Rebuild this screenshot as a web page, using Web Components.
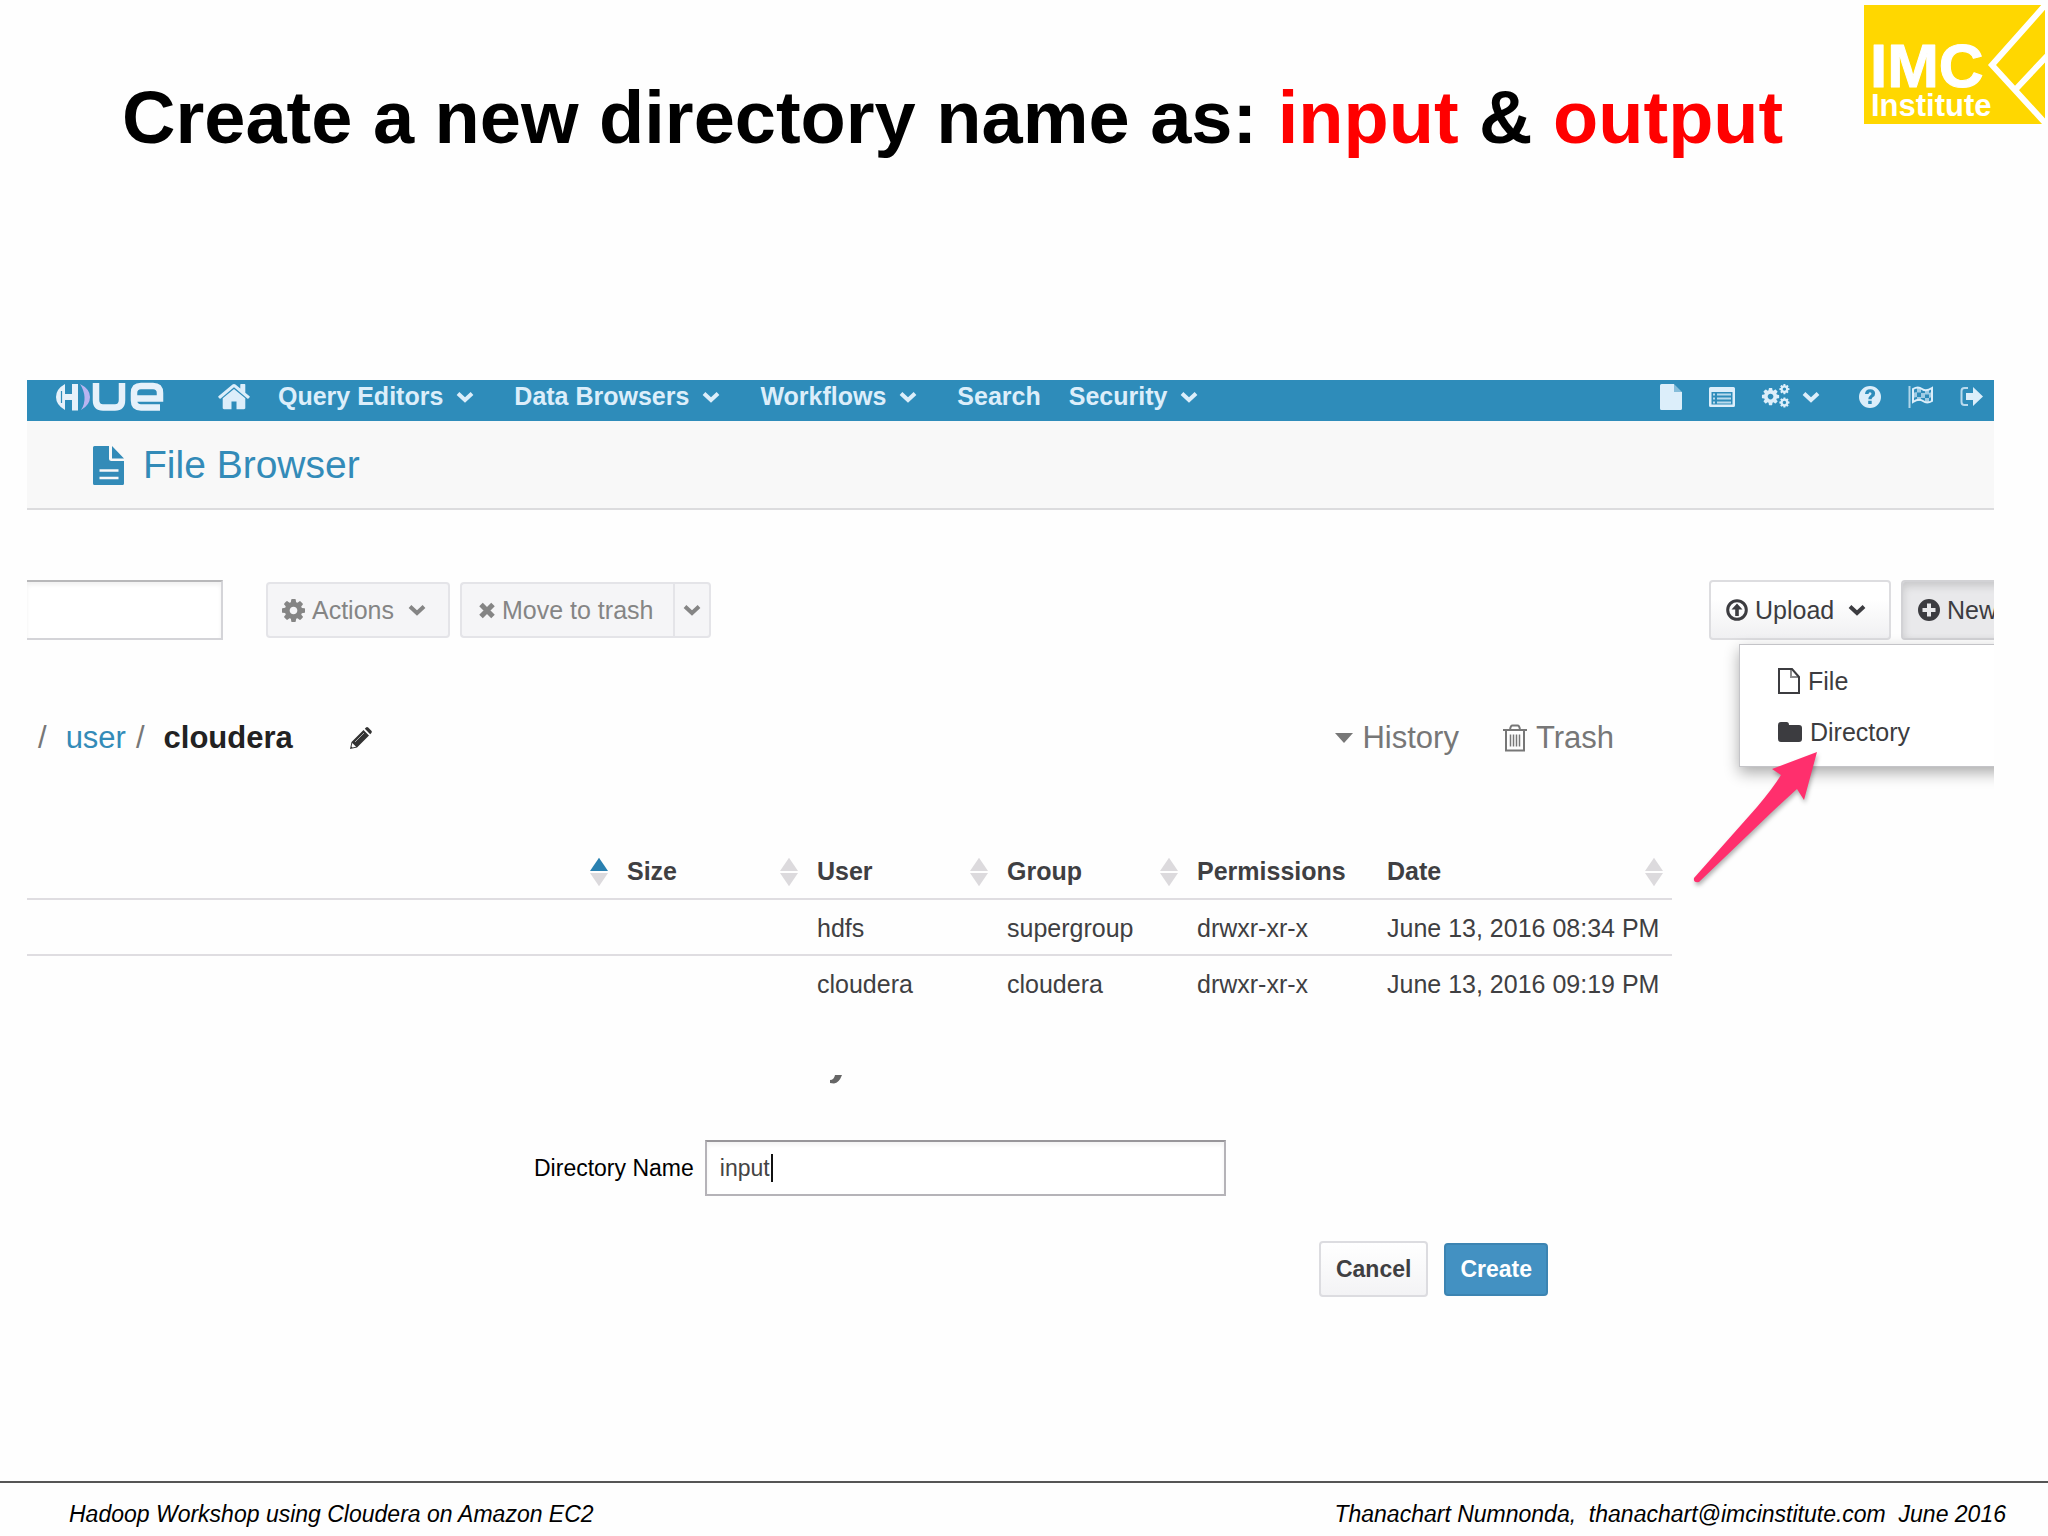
<!DOCTYPE html>
<html lang="en">
<head>
<meta charset="utf-8">
<title>Create a new directory</title>
<style>
  html, body { margin: 0; }
  body { background: #fefefe; color: #000; font-family: "Liberation Sans", Arial, sans-serif; }
</style>
</head>
<body>
<workshop-slide>
  <slide-heading slot="heading">Create a new directory name as: <em>input</em> &amp; <em>output</em></slide-heading>
  <hue-app></hue-app>
  <slide-footer slot="footer">
    <span slot="course">Hadoop Workshop using Cloudera on Amazon EC2</span>
    <span slot="author">Thanachart Numnonda,&nbsp; thanachart@imcinstitute.com&nbsp; June 2016</span>
  </slide-footer>
</workshop-slide>

<script>
const COG = 'M1152 896q0-106-75-181t-181-75-181 75-75 181 75 181 181 75 181-75 75-181zm512-109v222q0 12-8 23t-20 13l-185 28q-19 54-39 91 35 50 107 138 10 12 10 25t-9 23q-27 37-99 108t-94 71q-12 0-26-9l-138-108q-44 23-91 38-16 136-29 186-7 28-36 28h-222q-14 0-24.5-8.5t-11.5-21.5l-28-184q-49-16-90-37l-141 107q-10 9-25 9-14 0-25-11-126-114-165-168-7-10-7-23 0-12 8-23 15-21 51-66.5t54-70.5q-27-50-41-99l-183-27q-13-2-21-12.5t-8-23.5v-222q0-12 8-23t19-13l186-28q14-46 39-92-40-57-107-138-10-12-10-24 0-10 9-23 26-36 98.5-107.5t94.5-71.5q13 0 26 10l138 107q44-23 91-38 16-136 29-186 7-28 36-28h222q14 0 24.5 8.5t11.5 21.5l28 184q49 16 90 37l142-107q9-9 24-9 13 0 25 10 129 119 165 170 7 8 7 22 0 12-8 23-15 21-51 66.5t-54 70.5q26 50 41 98l183 28q13 2 21 12.5t8 23.5z';
const HOME = 'M1472 992v480q0 26-19 45t-45 19h-384v-384h-256v384h-384q-26 0-45-19t-19-45v-480q0-1 .5-3t.5-3l575-474 575 474q1 2 1 6zm223-69l-62 74q-8 9-21 11h-3q-13 0-21-7l-692-577-692 577q-12 8-24 7-13-2-21-11l-62-74q-8-10-7-23.5t11-21.5l719-599q32-26 76-26t76 26l244 204v-195q0-14 9-23t23-9h192q14 0 23 9t9 23v408l219 182q10 8 11 21.5t-7 23.5z';

// name: [width, height, viewBox, markup]
const ICONS = {
  chevron: [18, 12, '0 0 18 12', '<path d="M2 2.5l7 6.5 7-6.5" fill="none" stroke="currentColor" stroke-width="4"/>'],
  home: [32, 27, '80 236 1632 1310', `<path d="${HOME}"/>`],
  cog: [23, 23, '128 128 1536 1536', `<path d="${COG}"/>`],
  cogs: [28, 25, '0 0 28 25', `<g transform="translate(-1.500 2.500) scale(.0112)"><path d="${COG}"/></g><g transform="translate(16.500 -.8) scale(.0066)"><path d="${COG}"/></g><g transform="translate(16.500 12.600) scale(.0066)"><path d="${COG}"/></g>`],
  file: [22, 26, '0 0 22 26', '<path d="M0 1.500Q0 0 1.500 0H14v8h8v16.500q0 1.500-1.500 1.500h-19Q0 26 0 24.500z"/><path d="M14 0l8 8h-8z" opacity=".5"/>'],
  list: [26, 20, '0 0 26 20', '<path fill-rule="evenodd" d="M1.500 0h23Q26 0 26 1.500v17q0 1.500-1.500 1.500h-23Q0 20 0 18.500v-17Q0 0 1.500 0zM2.500 5v12.500h21V5z"/><path d="M4 6.500h2v2H4zm0 4h2v2H4zm0 4h2v2H4zM8 6.500h14v2H8zm0 4h14v2H8zm0 4h14v2H8z" opacity=".8"/>'],
  help: [22, 22, '0 0 22 22', '<path fill-rule="evenodd" d="M11 0a11 11 0 1 1 0 22a11 11 0 0 1 0-22zM6 8h3.500q.2-1.800 1.500-1.800 1.500 0 1.500 1.500 0 .9-1.300 1.700Q9.200 10.700 9.300 13.300h3.300q0-1.300 1.500-2.200 2-1.300 2-3.600 0-4-5-4.200Q6.300 3.300 6 8zM9.200 14.800V18h3.500v-3.200z"/>'],
  flag: [25, 22, '0 0 25 22', '<path d="M.5 0h2v22h-2z" opacity=".75"/><path d="M5 3q5-3 9 0t10-1v13q-5 3-9 0T5 16z" fill="none" stroke="currentColor" stroke-width="2"/><path d="M9 2h4v4.500H9zM17 4h4v4.500h-4zM5 7q3-1 4-1v5q-1 0-4 1zM13 7h4v5h-4zM21 7l3-1v5l-3 1zM9 11h4v4H9zM17 12h4v4h-4z" opacity=".65"/>'],
  exit: [23, 19, '0 0 23 19', '<path d="M8 1H4.500Q1.500 1 1.500 4v11q0 3 3 3H8" fill="none" stroke="currentColor" stroke-width="2" opacity=".8"/><path d="M6 6h7V0l10 9.500L13 19v-6H6z"/>'],
  doc: [31, 39, '0 0 31 39', '<path d="M1.500 0H16v12.500Q16 15 18.500 15H31v22.500q0 1.500-1.500 1.500h-28Q0 39 0 37.500v-36Q0 0 1.500 0zM19 0l12 12.500H19z"/><path d="M6.500 24.500h19M6.500 32h19" stroke="#f8f8f8" stroke-width="2.600"/>'],
  times: [16, 17, '0 0 16 17', '<path d="M2 2.500l12 12M14 2.500l-12 12" stroke="currentColor" stroke-width="5"/>'],
  pencil: [22, 22, '0 0 22 22', '<path d="M0 22l1.500-7L13.500 3l5.500 5.500L7 20.500zM14.800 1.800L16 .6q1-1 2.200 0L21.400 3.800q1 1 0 2.200l-1.200 1.200z"/><path d="M2.300 16l3.800 3.800-3.600.8-1-1z" fill="#fefefe"/><path d="M5 15L14 6" stroke="#aaa" stroke-width="1"/>'],
  upload: [22, 22, '0 0 22 22', '<circle cx="11" cy="11" r="9.300" fill="none" stroke="currentColor" stroke-width="3"/><path d="M11 4.500l5.500 6h-3.700V17H9.200v-6.500H5.500z"/>'],
  plus: [22, 22, '0 0 22 22', '<path fill-rule="evenodd" d="M11 0a11 11 0 1 1 0 22a11 11 0 0 1 0-22zM9 4.500V9H4.500v4H9v4.500h4V13h4.500V9H13V4.500z"/>'],
  page: [22, 26, '0 0 22 26', '<path d="M1 1h13l7 8v16H1z" fill="none" stroke="currentColor" stroke-width="2"/><path d="M13 1v8h8" fill="none" stroke="currentColor" stroke-width="2" opacity=".6"/>'],
  folder: [24, 20, '0 0 24 20', '<path d="M3 0h5.500Q11 0 11 3h10q3 0 3 3v11q0 3-3 3H3q-3 0-3-3V3Q0 0 3 0z"/>'],
  caret: [18, 10, '0 0 18 10', '<path d="M0 0h18l-9 10z"/>'],
  trash: [24, 28, '0 0 24 28', '<path d="M0 6h24M7 6q.5-4.500 2.500-4.500h5Q16.500 1.500 17 6M3 6v20.500h18V6" fill="none" stroke="currentColor" stroke-width="2"/><path d="M7.500 10.500v12M10.500 10.500v12M13.500 10.500v12M16.500 10.500v12" stroke="currentColor" stroke-width="1.500"/>'],
  sort: [18, 30, '0 0 19 30', '<path d="M9.500 0L19 14H0z" class="up"/><path d="M9.500 30L19 16H0z" fill="#dcdadd"/>'],
  hue: [108, 28, '0 0 108 28', '<g fill="none" stroke="#e6f1fa" stroke-width="6.500"><path d="M40 0v17q0 7.500 7 7.500h12q7 0 7-7.500V0"/><path d="M104 24.500H85q-7 0-7-7V10q0-7 7-7h12q7 0 7 7v5.500H80"/></g><path d="M9 1Q0 6 0 14t9 13V17h7v10.500h6V1h-6v10H9z" fill="#e6f1fa"/><path d="M5.500 8v12M12.500 2v8M12.500 18v9" stroke="#2e8cba" stroke-width="1.200"/><path d="M24 1q10 5 10 13t-9 13q4-6 3.500-13T24 1z" fill="#b9b4f0"/>']
};

class HueIcon extends HTMLElement {
  connectedCallback() {
    const [w, h, box, body] = ICONS[this.getAttribute('name')];
    this.attachShadow({ mode: 'open' }).innerHTML = `
      <style>:host{display:inline-flex;flex:none} svg{display:block;fill:currentColor;overflow:visible} .up{fill:#dcdadd} :host([active]) .up{fill:#2980b0}</style>
      <svg width="${w}" height="${h}" viewBox="${box}" aria-hidden="true">${body}</svg>`;
  }
}

function define(name, html) {
  const template = document.createElement('template');
  template.innerHTML = html;
  customElements.define(name, class extends HTMLElement {
    constructor() {
      super();
      this.attachShadow({ mode: 'open' }).append(template.content.cloneNode(true));
    }
  });
}

customElements.define('hue-icon', HueIcon);

define('imc-logo', `
  <style>
    :host { display: block; flex: none; }
    svg { display: block; }
    text { font-family: "Liberation Sans", Arial, sans-serif; font-weight: bold; fill: #fff; }
  </style>
  <svg width="181" height="119" viewBox="0 0 181 119" role="img" aria-label="IMC Institute">
    <path fill="#ffd700" d="M0 0h181v119H0z"/>
    <path fill="none" stroke="#fff" stroke-width="6" d="M183-2L128 60l55 60M152 84l31-33"/>
    <text x="6" y="82" font-size="62" stroke="#fff" stroke-width="1" stroke-linejoin="round">IMC</text>
    <text x="7" y="111" font-size="31">Institute</text>
  </svg>`);

define('slide-heading', `
  <style>
    :host { display: flex; align-items: flex-start; padding: 5px 3px 0 0; min-height: 375px; }
    h1 { flex: 1; margin: 0; padding: 71px 0 0 122px; font-size: 74px; line-height: 84px; font-weight: bold; }
    ::slotted(em) { font-style: normal; color: #f00; }
  </style>
  <h1><slot></slot></h1>
  <imc-logo></imc-logo>`);

define('slide-footer', `
  <style>
    :host { display: flex; justify-content: space-between; border-top: 2px solid #555; padding: 18px 42px 9px 69px; font-size: 23px; line-height: 26px; font-style: italic; }
  </style>
  <slot name="course"></slot><slot name="author"></slot>`);

define('workshop-slide', `
  <style>
    :host { display: flex; flex-direction: column; min-height: 100vh; }
    main { flex: 1; padding: 0 54px 0 27px; }
  </style>
  <slot name="heading"></slot>
  <main><slot></slot></main>
  <slot name="footer"></slot>`);

define('nav-entry', `
  <style>
    :host { display: block; margin-right: 28px; }
    :host([menu]) { margin-right: 40px; }
    a { display: flex; align-items: center; gap: 13px; color: inherit; text-decoration: none; white-space: nowrap; }
    hue-icon { display: none; }
    :host([menu]) hue-icon { display: inline-flex; }
  </style>
  <a href="#"><slot></slot><hue-icon name="chevron"></hue-icon></a>`);

define('hue-navbar', `
  <style>
    :host { display: block; background: #2e8cba; color: #dceefa; }
    nav { display: flex; align-items: center; padding: 2px 11px 10px 29px; font-size: 25px; line-height: 29px; font-weight: bold; }
    .brand { margin-right: 54px; }
    .tools { display: flex; align-items: center; gap: 27px; margin-left: auto; }
    a { display: flex; align-items: center; gap: 12px; color: inherit; text-decoration: none; }
    .config { margin-right: 12px; }
  </style>
  <nav>
    <a class="brand" href="#" aria-label="Hue"><hue-icon name="hue"></hue-icon></a>
    <nav-entry><hue-icon name="home"></hue-icon></nav-entry>
    <nav-entry menu>Query Editors</nav-entry>
    <nav-entry menu>Data Browsers</nav-entry>
    <nav-entry menu>Workflows</nav-entry>
    <nav-entry>Search</nav-entry>
    <nav-entry menu>Security</nav-entry>
    <div class="tools">
      <a href="#" aria-label="Files"><hue-icon name="file"></hue-icon></a>
      <a href="#" aria-label="Jobs"><hue-icon name="list"></hue-icon></a>
      <a class="config" href="#" aria-label="Settings"><hue-icon name="cogs"></hue-icon><hue-icon name="chevron"></hue-icon></a>
      <a href="#" aria-label="Help"><hue-icon name="help"></hue-icon></a>
      <a href="#" aria-label="Tour"><hue-icon name="flag"></hue-icon></a>
      <a href="#" aria-label="Sign out"><hue-icon name="exit"></hue-icon></a>
    </div>
  </nav>`);

define('app-title', `
  <style>
    :host { display: flex; align-items: center; gap: 19px; padding: 22px 66px 21px; background: #f8f8f8; border-bottom: 2px solid #dcdcde; color: #338bb8; }
    h2 { margin: 0; font-size: 39px; line-height: 44px; font-weight: normal; }
  </style>
  <hue-icon name="doc"></hue-icon><h2><slot></slot></h2>`);

define('tool-button', `
  <style>
    :host { display: block; }
    button { display: flex; align-items: center; gap: 7px; width: 100%; height: 100%; box-sizing: border-box; margin: 0; padding: 0 14px; border: 2px solid #e4e4e8; border-radius: 4px; background: #f5f5f7; color: #858585; font: 25px/29px "Liberation Sans", Arial, sans-serif; white-space: nowrap; }
    :host([join=left]) button { border-radius: 4px 0 0 4px; border-right-width: 0; padding: 0 17px; }
    :host([join=right]) button { border-radius: 0 4px 4px 0; padding: 0 8px; }
    :host([kind=light]) button { padding: 0 15px; gap: 7px; color: #3c3c40; border-color: #dddde0; background: linear-gradient(#fff 30%, #f0f0f2); }
    :host([kind=pressed]) button { padding: 0 15px; gap: 7px; color: #3c3c40; border-color: #d2d2d5; background: #e9e9eb; box-shadow: inset 0 4px 8px rgba(0,0,0,.15); }
    .end { margin-left: 7px; display: none; }
    :host([menu]) .end { display: flex; }
  </style>
  <button type="button"><slot></slot><span class="end"><hue-icon name="chevron"></hue-icon></span></button>`);

define('new-menu', `
  <style>
    :host { display: block; position: relative; width: 93px; }
    tool-button { width: 150px; height: 100%; }
    .menu { position: absolute; left: -162px; top: 64px; width: 300px; box-sizing: border-box; margin: 0; padding: 21px 38px 8px; list-style: none; background: #fff; border: 1px solid #c4c4c8; box-shadow: 0 6px 14px rgba(0,0,0,.32); color: #3c3c40; font-size: 25px; line-height: 30px; }
    .menu a { display: flex; align-items: center; gap: 8px; padding-bottom: 21px; color: inherit; text-decoration: none; }
    li:last-child a { padding-bottom: 11px; }
    .arrow { position: absolute; left: -208px; top: 170px; overflow: visible; filter: drop-shadow(1px 3px 2px rgba(0,0,0,.3)); }
  </style>
  <tool-button kind="pressed"><hue-icon name="plus"></hue-icon>New</tool-button>
  <ul class="menu">
    <li><a href="#"><hue-icon name="page"></hue-icon>File</a></li>
    <li><a href="#"><hue-icon name="folder"></hue-icon>Directory</a></li>
  </ul>
  <svg class="arrow" width="126" height="136" viewBox="0 0 126 136" aria-hidden="true">
    <path fill="#ff2f6d" d="M124 2L79 19l9 6Q80 38 64 57L1 128q-1 5 5 4L79 62q14-13 25-23l7 11z"/>
  </svg>`);

define('file-toolbar', `
  <style>
    :host { display: flex; align-items: center; height: 60px; margin-top: 70px; }
    input { width: 196px; height: 60px; box-sizing: border-box; border: 2px solid #d4d4d8; border-left: 0; border-top: 2px solid #b8b8ba; border-radius: 0; background: #fff; padding: 0 12px; font: 25px "Liberation Sans", Arial, sans-serif; box-shadow: inset 0 3px 4px rgba(0,0,0,.06); }
    .actions, .trash { height: 56px; display: flex; }
    .actions { margin-left: 43px; }
    .actions tool-button { width: 184px; }
    .trash { margin-left: 10px; }
    .trash tool-button:first-child { width: 213px; }
    .create { display: flex; gap: 10px; height: 60px; margin-left: auto; }
    .create tool-button { width: 182px; }
  </style>
  <input type="text" aria-label="Search for file name">
  <div class="actions"><tool-button menu><hue-icon name="cog"></hue-icon>Actions</tool-button></div>
  <div class="trash">
    <tool-button join="left"><hue-icon name="times"></hue-icon>Move to trash</tool-button>
    <tool-button join="right"><hue-icon name="chevron"></hue-icon></tool-button>
  </div>
  <div class="create">
    <tool-button kind="light" menu><hue-icon name="upload"></hue-icon>Upload</tool-button>
    <new-menu></new-menu>
  </div>`);

define('path-bar', `
  <style>
    :host { display: flex; align-items: center; margin-top: 80px; padding: 0 380px 0 11px; font-size: 31px; line-height: 36px; color: #777; }
    a { display: flex; align-items: center; gap: 9px; color: inherit; text-decoration: none; }
    .user { color: #338bb8; margin: 0 10px 0 19px; }
    b { color: #222; margin: 0 57px 0 19px; }
    .edit { color: #333; }
    .links { display: flex; gap: 44px; margin-left: auto; }
  </style>
  <span>/</span><a class="user" href="#">user</a><span>/</span><b>cloudera</b>
  <a class="edit" href="#" aria-label="Edit path"><hue-icon name="pencil"></hue-icon></a>
  <div class="links">
    <a href="#"><hue-icon name="caret"></hue-icon>History</a>
    <a href="#"><hue-icon name="trash"></hue-icon>Trash</a>
  </div>`);

define('file-table', `
  <style>
    :host { display: block; margin: 89px 322px 0 0; color: #3f3f42; font-size: 25px; line-height: 29px; }
    table { width: 100%; table-layout: fixed; border-collapse: separate; border-spacing: 0; }
    th, td { text-align: left; white-space: nowrap; border-bottom: 2px solid #dfdde1; }
    th { padding: 12px 9px 12px 10px; }
    td { padding: 14px 0 11px 10px; }
    tr:last-child td { border-bottom: 0; }
    th div { display: flex; align-items: center; justify-content: space-between; height: 29px; }
    .c { width: 190px; } .d { width: 295px; }
  </style>
  <table>
    <colgroup><col><col class="c"><col class="c"><col class="c"><col class="c"><col class="d"></colgroup>
    <thead><tr>
      <th aria-label="Name"><div><span></span><hue-icon name="sort" active></hue-icon></div></th>
      <th><div>Size<hue-icon name="sort"></hue-icon></div></th>
      <th><div>User<hue-icon name="sort"></hue-icon></div></th>
      <th><div>Group<hue-icon name="sort"></hue-icon></div></th>
      <th><div>Permissions</div></th>
      <th><div>Date<hue-icon name="sort"></hue-icon></div></th>
    </tr></thead>
    <tbody>
      <tr><td></td><td></td><td>hdfs</td><td>supergroup</td><td>drwxr-xr-x</td><td>June 13, 2016 08:34 PM</td></tr>
      <tr><td></td><td></td><td>cloudera</td><td>cloudera</td><td>drwxr-xr-x</td><td>June 13, 2016 09:19 PM</td></tr>
    </tbody>
  </table>`);

define('directory-dialog', `
  <style>
    :host { display: block; width: 1014px; margin: 65px 0 0 507px; font-size: 23px; line-height: 28px; }
    .edge { display: block; margin-left: 295px; }
    .field { display: flex; align-items: center; gap: 11px; margin-top: 56px; }
    .box { position: relative; width: 521px; }
    input { display: block; width: 100%; height: 56px; box-sizing: border-box; margin: 0; padding: 0 13px; border: 2px solid #b5b3b8; border-top-color: #98969a; border-radius: 0; background: #fff; color: #444; font: 23px/28px "Liberation Sans", Arial, sans-serif; box-shadow: inset 0 3px 4px rgba(0,0,0,.05); }
    .cursor { position: absolute; left: 66px; top: 14px; width: 2px; height: 28px; background: #111; }
    .buttons { display: flex; align-items: center; justify-content: flex-end; gap: 16px; margin-top: 45px; }
    button { box-sizing: border-box; height: 56px; padding: 0 15px; border: 2px solid #dcdce0; border-radius: 4px; background: linear-gradient(#fff, #f3f3f5); color: #3f3f42; font: bold 23px/28px "Liberation Sans", Arial, sans-serif; }
    .primary { height: 53px; padding: 0 14px; background: #4391c2; border-color: #3c84b2; color: #fff; }
  </style>
  <svg class="edge" width="14" height="9" viewBox="0 0 14 9" aria-hidden="true"><path fill="#666" d="M6 0h7Q10 8 5 8.500L1 8V5q4 0 5-5z"/></svg>
  <div class="field">
    <label for="dir">Directory Name</label>
    <div class="box"><input id="dir" type="text" value="input"><span class="cursor"></span></div>
  </div>
  <div class="buttons">
    <button type="button">Cancel</button>
    <button class="primary" type="button">Create</button>
  </div>`);

define('hue-app', `
  <style>:host { display: block; overflow: hidden; }</style>
  <hue-navbar></hue-navbar>
  <app-title>File Browser</app-title>
  <file-toolbar></file-toolbar>
  <path-bar></path-bar>
  <file-table></file-table>
  <directory-dialog></directory-dialog>`);
</script>
</body>
</html>
